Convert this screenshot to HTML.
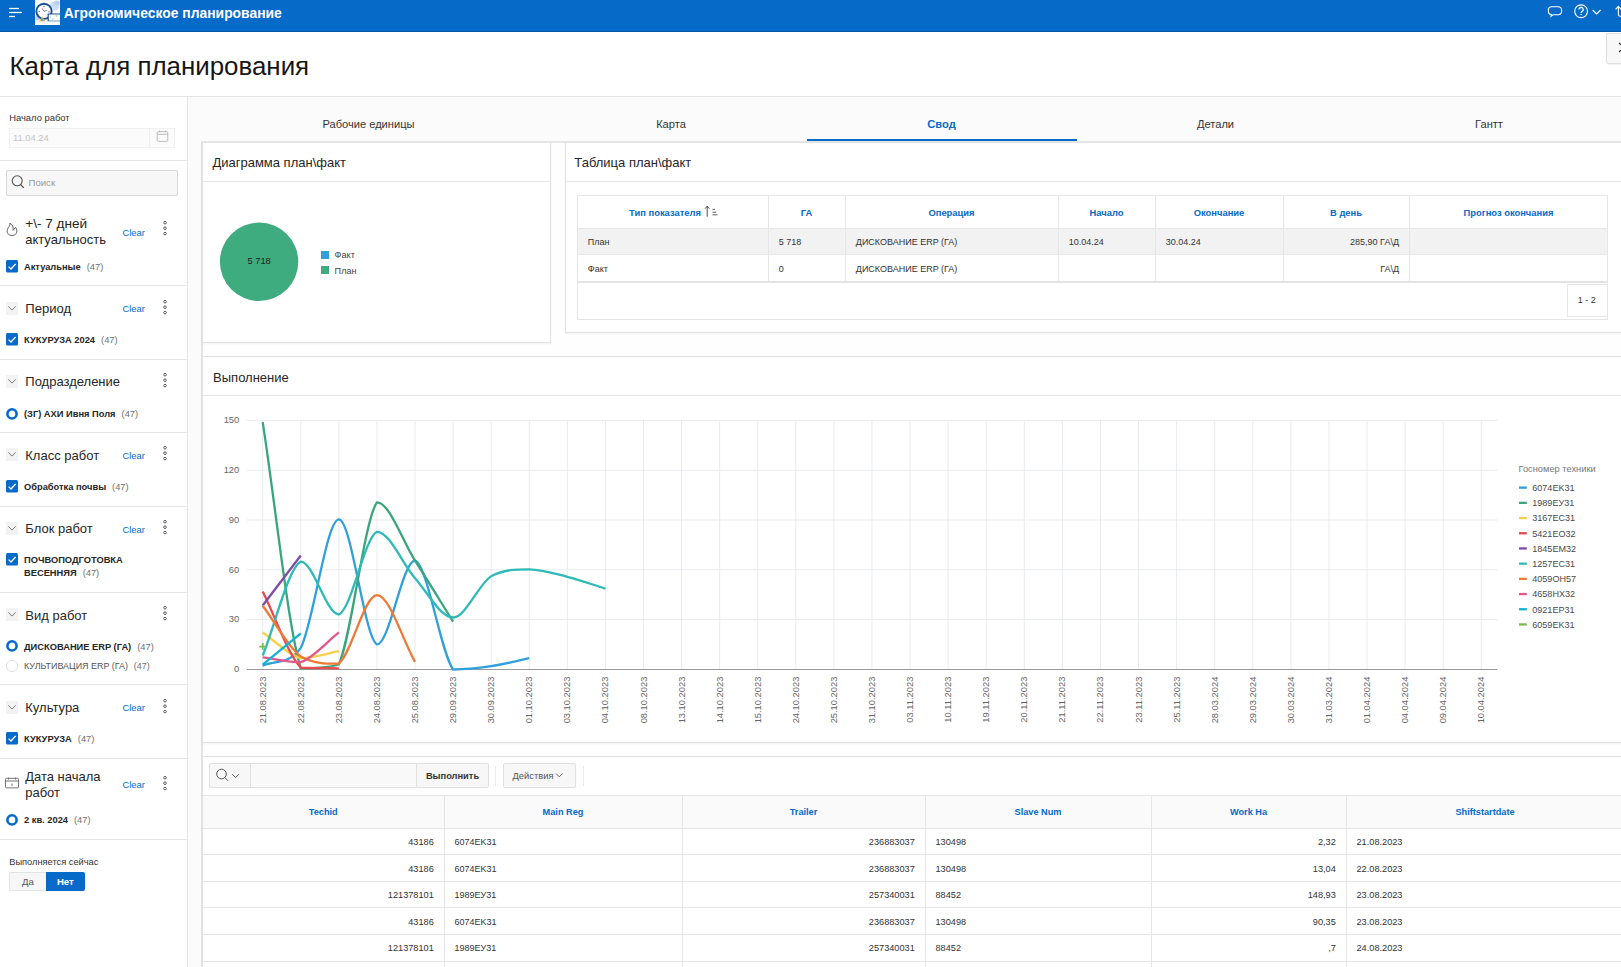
<!DOCTYPE html>
<html><head><meta charset="utf-8"><title>Карта для планирования</title>
<style>
html,body{margin:0;padding:0;}
body{width:1621px;height:967px;overflow:hidden;position:relative;background:#fff;font-family:"Liberation Sans", sans-serif;}
.b{position:absolute;}
.t{position:absolute;white-space:nowrap;line-height:1;}
svg text{font-family:"Liberation Sans", sans-serif;}
</style></head><body>
<div class="b" style="left:0px;top:0px;width:1621px;height:32px;background:#056ac8;"></div><div class="b" style="left:0px;top:31px;width:1621px;height:1px;background:#0458a8;"></div><svg class="b" style="left:0px;top:0px;" width="30" height="30" viewBox="0 0 30 30"><g stroke="#fff" stroke-width="1.3"><line x1="9" y1="8.5" x2="19" y2="8.5"/><line x1="9" y1="12.5" x2="22" y2="12.5"/><line x1="9" y1="16.5" x2="15" y2="16.5"/></g></svg><svg class="b" style="left:35px;top:0px;" width="25" height="25" viewBox="0 0 25 25"><rect x="0" y="0" width="25" height="25" fill="#fafcff"/>
<circle cx="19.5" cy="6" r="4.5" fill="#c9ddf6"/><circle cx="22" cy="3" r="2.5" fill="#b5d0f2"/><circle cx="17" cy="9.5" r="2" fill="#dce9f8"/>
<circle cx="2.5" cy="18" r="2.5" fill="#b9d3f0"/>
<circle cx="9" cy="11.3" r="7.6" fill="#fff" stroke="#1d4e8f" stroke-width="1.9"/>
<circle cx="9" cy="6.3" r="0.6" fill="#333"/><circle cx="4.2" cy="11.5" r="0.6" fill="#333"/><circle cx="14" cy="11.8" r="0.6" fill="#333"/>
<line x1="9" y1="11.3" x2="7" y2="8.3" stroke="#e04848" stroke-width="0.8"/>
<line x1="9" y1="11.3" x2="11.8" y2="10.3" stroke="#2a5fb0" stroke-width="0.8"/>
<path d="M4.2 15.5 l-2 -2.5" stroke="#e04848" stroke-width="0.6"/>
<path d="M4 21.5 l3.2 -5 l3.2 5z" fill="#f2b92e"/><circle cx="7.2" cy="19.8" r="1.2" fill="#4a9fd0"/>
<rect x="12.6" y="13.5" width="12.4" height="8" fill="#1f4f8f"/>
<rect x="13.8" y="14.5" width="11.2" height="6.2" fill="#fbfdff"/>
<circle cx="21.5" cy="16" r="0.8" fill="#8fd08a"/><circle cx="18" cy="19" r="0.8" fill="#9fd0a0"/><circle cx="15.5" cy="17" r="0.6" fill="#9cc3ec"/>
<rect x="0" y="21.7" width="25" height="3.3" fill="#fff"/>
<rect x="1" y="21.5" width="24" height="0.8" fill="#cfe3ef"/></svg><div class="t" style="left:63.80px;top:6.83px;font-size:13.9px;color:#fff;font-weight:bold;">Агрономическое планирование</div><svg class="b" style="left:1540px;top:0px;" width="81" height="32" viewBox="0 0 81 32"><g fill="none" stroke="#fff" stroke-width="1.1">
<path d="M11.6 6.7 h6.8 a3.2 3.2 0 0 1 3.2 3.2 v1.6 a3.2 3.2 0 0 1 -3.2 3.2 h-5.3 l-2 1.7 l0.2 -1.8 a3.2 3.2 0 0 1 -2.9 -3.1 v-1.6 a3.2 3.2 0 0 1 3.2 -3.2z"/>
<circle cx="41.1" cy="11.25" r="6.4"/>
<path d="M39 9.6 a2.1 2.1 0 1 1 3.1 1.8 c-0.7 0.35 -1 0.8 -1 1.6" stroke-width="1.3"/>
<path d="M52.6 10 l4 4 l4 -4"/>
<path d="M78.4 15 v-8.6 M75.6 9.4 l2.8 -3 l2.8 3 M78.4 14.5 q0 1.8 2 1.8 h3"/>
</g><circle cx="41.1" cy="14.6" r="0.75" fill="#fff"/></svg><div class="b" style="left:1605.5px;top:32.5px;width:20px;height:31px;background:#f8f8f8;border:1px solid #dedede;border-radius:0 0 0 3px;box-sizing:border-box;box-shadow:0 1px 1px rgba(0,0,0,0.05);"></div><svg class="b" style="left:1605px;top:33px;" width="16" height="30" viewBox="0 0 16 30"><path d="M14 10 l3 2.5 M14 19 l3 -2.5" stroke="#333" stroke-width="1.2" fill="none"/></svg><div class="t" style="left:9.50px;top:53.58px;font-size:25.9px;color:#161616;font-weight:normal;">Карта для планирования</div><div class="b" style="left:0px;top:96px;width:1621px;height:1px;background:#e3e3e3;"></div><div class="b" style="left:187px;top:97px;width:1px;height:870px;background:#e6e6e6;"></div><div class="t" style="left:9.20px;top:113.44px;font-size:9.4px;color:#333;font-weight:normal;">Начало работ</div><div class="b" style="left:9px;top:128px;width:165.5px;height:20px;background:#fbfbfb;border:1px solid #f1f1f1;box-sizing:border-box;"></div><div class="b" style="left:149.4px;top:128px;width:1px;height:20px;background:#eeeeee;"></div><div class="t" style="left:13.00px;top:133.24px;font-size:9.4px;color:#c4c4c4;font-weight:normal;">11.04.24</div><svg class="b" style="left:155px;top:128px;" width="16" height="16" viewBox="0 0 16 16"><g fill="none" stroke="#b4b4b4" stroke-width="0.85"><rect x="2.2" y="3.6" width="10.6" height="9.8" rx="1.2"/><line x1="2.2" y1="6.4" x2="12.8" y2="6.4"/><line x1="4.6" y1="2.6" x2="4.6" y2="4.4"/><line x1="10.6" y1="2.6" x2="10.6" y2="4.4"/></g></svg><div class="b" style="left:0px;top:160px;width:187px;height:1px;background:#e6e6e6;"></div><div class="b" style="left:6px;top:170px;width:172px;height:25.5px;background:#f7f7f7;border:1px solid #d9d9d9;border-radius:2px;box-sizing:border-box;"></div><svg class="b" style="left:9px;top:173px;" width="18" height="18" viewBox="0 0 18 18"><g fill="none" stroke="#555" stroke-width="1.1"><circle cx="8.2" cy="7.8" r="5"/><line x1="11.6" y1="11.5" x2="14.8" y2="14.8"/></g></svg><div class="t" style="left:28.50px;top:178.07px;font-size:9.6px;color:#9a9a9a;font-weight:normal;">Поиск</div><svg class="b" style="left:5px;top:221px;" width="14" height="16" viewBox="0 0 14 16"><path d="M4.9 2.2 C7.6 3.6 8.6 6.2 8 9.4 L10.5 6.4 C12.4 8.4 12.4 11.6 10.5 13.4 C9 14.9 5 15 3.3 13.2 C1.6 11.5 1.8 8.6 3.3 6.6 C4.3 5.1 5 3.6 4.9 2.2 Z" fill="none" stroke="#555" stroke-width="0.9" stroke-linejoin="round"/></svg><div class="t" style="left:25.20px;top:217.19px;font-size:13.6px;color:#262626;font-weight:normal;">+\- 7 дней</div><div class="t" style="left:25.20px;top:232.70px;font-size:13.0px;color:#262626;font-weight:normal;">актуальность</div><div class="t" style="left:122.50px;top:228.59px;font-size:9.35px;color:#056ac8;font-weight:normal;">Clear</div><svg class="b" style="left:160px;top:220.0px;" width="10" height="16" viewBox="0 0 10 16"><g fill="#fff" stroke="#444" stroke-width="0.85"><circle cx="5" cy="2.7" r="1.3"/><circle cx="5" cy="8.2" r="1.3"/><circle cx="5" cy="13.6" r="1.3"/></g></svg><svg class="b" style="left:6px;top:260px;" width="13" height="13" viewBox="0 0 13 13"><rect x="0" y="0" width="12" height="12.6" rx="1.5" fill="#056ac8"/><path d="M2.6 6.6 l2.4 2.4 l4.6 -5" fill="none" stroke="#fff" stroke-width="1.3"/></svg><div class="t" style="left:24px;top:262.73px;font-size:9.3px;color:#262626;font-weight:bold;">Актуальные<span style="font-weight:normal;color:#707070;margin-left:6px;">(47)</span></div><div class="b" style="left:0px;top:285px;width:187px;height:1px;background:#e6e6e6;"></div><div class="b" style="left:6px;top:302px;width:12px;height:12.5px;background:#f3f3f3;"></div><svg class="b" style="left:6px;top:302px;" width="12" height="13" viewBox="0 0 12 13"><path d="M2.3 4.3 l3.7 3.8 l3.7 -3.8" fill="none" stroke="#707070" stroke-width="0.9"/></svg><div class="t" style="left:25.30px;top:302.41px;font-size:13.1px;color:#262626;font-weight:normal;">Период</div><div class="t" style="left:122.50px;top:305.49px;font-size:9.35px;color:#056ac8;font-weight:normal;">Clear</div><svg class="b" style="left:160px;top:299.0px;" width="10" height="16" viewBox="0 0 10 16"><g fill="#fff" stroke="#444" stroke-width="0.85"><circle cx="5" cy="2.7" r="1.3"/><circle cx="5" cy="8.2" r="1.3"/><circle cx="5" cy="13.6" r="1.3"/></g></svg><svg class="b" style="left:6px;top:333.3px;" width="13" height="13" viewBox="0 0 13 13"><rect x="0" y="0" width="12" height="12.6" rx="1.5" fill="#056ac8"/><path d="M2.6 6.6 l2.4 2.4 l4.6 -5" fill="none" stroke="#fff" stroke-width="1.3"/></svg><div class="t" style="left:24px;top:335.73px;font-size:9.3px;color:#262626;font-weight:bold;">КУКУРУЗА 2024<span style="font-weight:normal;color:#707070;margin-left:6px;">(47)</span></div><div class="b" style="left:0px;top:359px;width:187px;height:1px;background:#e6e6e6;"></div><div class="b" style="left:6px;top:375px;width:12px;height:12.5px;background:#f3f3f3;"></div><svg class="b" style="left:6px;top:375px;" width="12" height="13" viewBox="0 0 12 13"><path d="M2.3 4.3 l3.7 3.8 l3.7 -3.8" fill="none" stroke="#707070" stroke-width="0.9"/></svg><div class="t" style="left:25.30px;top:375.30px;font-size:13.0px;color:#262626;font-weight:normal;">Подразделение</div><svg class="b" style="left:160px;top:372.0px;" width="10" height="16" viewBox="0 0 10 16"><g fill="#fff" stroke="#444" stroke-width="0.85"><circle cx="5" cy="2.7" r="1.3"/><circle cx="5" cy="8.2" r="1.3"/><circle cx="5" cy="13.6" r="1.3"/></g></svg><svg class="b" style="left:5px;top:406.5px;" width="14" height="14" viewBox="0 0 14 14"><circle cx="7" cy="6.9" r="4.6" fill="#fff" stroke="#056ac8" stroke-width="2.6"/></svg><div class="t" style="left:24px;top:409.73px;font-size:9.3px;color:#262626;font-weight:bold;">(ЗГ) АХИ Ивня Поля<span style="font-weight:normal;color:#707070;margin-left:6px;">(47)</span></div><div class="b" style="left:0px;top:432px;width:187px;height:1px;background:#e6e6e6;"></div><div class="b" style="left:6px;top:448.2px;width:12px;height:12.5px;background:#f3f3f3;"></div><svg class="b" style="left:6px;top:448.2px;" width="12" height="13" viewBox="0 0 12 13"><path d="M2.3 4.3 l3.7 3.8 l3.7 -3.8" fill="none" stroke="#707070" stroke-width="0.9"/></svg><div class="t" style="left:25.30px;top:448.90px;font-size:13.0px;color:#262626;font-weight:normal;">Класс работ</div><div class="t" style="left:122.50px;top:452.49px;font-size:9.35px;color:#056ac8;font-weight:normal;">Clear</div><svg class="b" style="left:160px;top:445.0px;" width="10" height="16" viewBox="0 0 10 16"><g fill="#fff" stroke="#444" stroke-width="0.85"><circle cx="5" cy="2.7" r="1.3"/><circle cx="5" cy="8.2" r="1.3"/><circle cx="5" cy="13.6" r="1.3"/></g></svg><svg class="b" style="left:6px;top:480.4px;" width="13" height="13" viewBox="0 0 13 13"><rect x="0" y="0" width="12" height="12.6" rx="1.5" fill="#056ac8"/><path d="M2.6 6.6 l2.4 2.4 l4.6 -5" fill="none" stroke="#fff" stroke-width="1.3"/></svg><div class="t" style="left:24px;top:482.83px;font-size:9.3px;color:#262626;font-weight:bold;">Обработка почвы<span style="font-weight:normal;color:#707070;margin-left:6px;">(47)</span></div><div class="b" style="left:0px;top:506px;width:187px;height:1px;background:#e6e6e6;"></div><div class="b" style="left:6px;top:522px;width:12px;height:12.5px;background:#f3f3f3;"></div><svg class="b" style="left:6px;top:522px;" width="12" height="13" viewBox="0 0 12 13"><path d="M2.3 4.3 l3.7 3.8 l3.7 -3.8" fill="none" stroke="#707070" stroke-width="0.9"/></svg><div class="t" style="left:25.30px;top:521.80px;font-size:13.0px;color:#262626;font-weight:normal;">Блок работ</div><div class="t" style="left:122.50px;top:525.99px;font-size:9.35px;color:#056ac8;font-weight:normal;">Clear</div><svg class="b" style="left:160px;top:519.0px;" width="10" height="16" viewBox="0 0 10 16"><g fill="#fff" stroke="#444" stroke-width="0.85"><circle cx="5" cy="2.7" r="1.3"/><circle cx="5" cy="8.2" r="1.3"/><circle cx="5" cy="13.6" r="1.3"/></g></svg><svg class="b" style="left:6px;top:553.4px;" width="13" height="13" viewBox="0 0 13 13"><rect x="0" y="0" width="12" height="12.6" rx="1.5" fill="#056ac8"/><path d="M2.6 6.6 l2.4 2.4 l4.6 -5" fill="none" stroke="#fff" stroke-width="1.3"/></svg><div class="t" style="left:24.00px;top:556.03px;font-size:9.3px;color:#262626;font-weight:bold;">ПОЧВОПОДГОТОВКА</div><div class="t" style="left:24px;top:568.93px;font-size:9.3px;color:#262626;font-weight:bold;">ВЕСЕННЯЯ<span style="font-weight:normal;color:#707070;margin-left:6px;">(47)</span></div><div class="b" style="left:0px;top:592px;width:187px;height:1px;background:#e6e6e6;"></div><div class="b" style="left:6px;top:608.2px;width:12px;height:12.5px;background:#f3f3f3;"></div><svg class="b" style="left:6px;top:608.2px;" width="12" height="13" viewBox="0 0 12 13"><path d="M2.3 4.3 l3.7 3.8 l3.7 -3.8" fill="none" stroke="#707070" stroke-width="0.9"/></svg><div class="t" style="left:25.30px;top:608.90px;font-size:13.0px;color:#262626;font-weight:normal;">Вид работ</div><svg class="b" style="left:160px;top:605.0px;" width="10" height="16" viewBox="0 0 10 16"><g fill="#fff" stroke="#444" stroke-width="0.85"><circle cx="5" cy="2.7" r="1.3"/><circle cx="5" cy="8.2" r="1.3"/><circle cx="5" cy="13.6" r="1.3"/></g></svg><svg class="b" style="left:5px;top:639.3px;" width="14" height="14" viewBox="0 0 14 14"><circle cx="7" cy="6.9" r="4.6" fill="#fff" stroke="#056ac8" stroke-width="2.6"/></svg><div class="t" style="left:24px;top:643.13px;font-size:9.3px;color:#262626;font-weight:bold;">ДИСКОВАНИЕ ERP (ГА)<span style="font-weight:normal;color:#707070;margin-left:6px;">(47)</span></div><svg class="b" style="left:5px;top:658.7px;" width="14" height="14" viewBox="0 0 14 14"><circle cx="7" cy="7" r="5.6" fill="#fff" stroke="#dcdcdc" stroke-width="0.9"/></svg><div class="t" style="left:24px;top:662.42px;font-size:8.95px;color:#555;font-weight:normal;">КУЛЬТИВАЦИЯ ERP (ГА)<span style="font-weight:normal;color:#707070;margin-left:6px;">(47)</span></div><div class="b" style="left:0px;top:684px;width:187px;height:1px;background:#e6e6e6;"></div><div class="b" style="left:6px;top:701px;width:12px;height:12.5px;background:#f3f3f3;"></div><svg class="b" style="left:6px;top:701px;" width="12" height="13" viewBox="0 0 12 13"><path d="M2.3 4.3 l3.7 3.8 l3.7 -3.8" fill="none" stroke="#707070" stroke-width="0.9"/></svg><div class="t" style="left:25.30px;top:700.60px;font-size:13.0px;color:#262626;font-weight:normal;">Культура</div><div class="t" style="left:122.50px;top:704.49px;font-size:9.35px;color:#056ac8;font-weight:normal;">Clear</div><svg class="b" style="left:160px;top:698.0px;" width="10" height="16" viewBox="0 0 10 16"><g fill="#fff" stroke="#444" stroke-width="0.85"><circle cx="5" cy="2.7" r="1.3"/><circle cx="5" cy="8.2" r="1.3"/><circle cx="5" cy="13.6" r="1.3"/></g></svg><svg class="b" style="left:6px;top:732.4px;" width="13" height="13" viewBox="0 0 13 13"><rect x="0" y="0" width="12" height="12.6" rx="1.5" fill="#056ac8"/><path d="M2.6 6.6 l2.4 2.4 l4.6 -5" fill="none" stroke="#fff" stroke-width="1.3"/></svg><div class="t" style="left:24px;top:734.53px;font-size:9.3px;color:#262626;font-weight:bold;">КУКУРУЗА<span style="font-weight:normal;color:#707070;margin-left:6px;">(47)</span></div><div class="b" style="left:0px;top:757.5px;width:187px;height:1px;background:#e6e6e6;"></div><svg class="b" style="left:4px;top:775px;" width="16" height="14" viewBox="0 0 16 14"><g fill="none" stroke="#666" stroke-width="0.9"><rect x="1.5" y="3.3" width="13" height="9.6" rx="1"/><line x1="1.5" y1="6" x2="14.5" y2="6"/><line x1="4.5" y1="2.6" x2="4.5" y2="4.5"/><line x1="11.5" y1="2.6" x2="11.5" y2="4.5"/><line x1="8" y1="8.5" x2="8" y2="11.2"/></g></svg><div class="t" style="left:25.20px;top:770.20px;font-size:13.0px;color:#262626;font-weight:normal;">Дата начала</div><div class="t" style="left:25.20px;top:786.00px;font-size:13.0px;color:#262626;font-weight:normal;">работ</div><div class="t" style="left:122.50px;top:781.19px;font-size:9.35px;color:#056ac8;font-weight:normal;">Clear</div><svg class="b" style="left:160px;top:774.5px;" width="10" height="16" viewBox="0 0 10 16"><g fill="#fff" stroke="#444" stroke-width="0.85"><circle cx="5" cy="2.7" r="1.3"/><circle cx="5" cy="8.2" r="1.3"/><circle cx="5" cy="13.6" r="1.3"/></g></svg><svg class="b" style="left:5px;top:812.5px;" width="14" height="14" viewBox="0 0 14 14"><circle cx="7" cy="6.9" r="4.6" fill="#fff" stroke="#056ac8" stroke-width="2.6"/></svg><div class="t" style="left:24px;top:816.23px;font-size:9.3px;color:#262626;font-weight:bold;">2 кв. 2024<span style="font-weight:normal;color:#707070;margin-left:6px;">(47)</span></div><div class="b" style="left:0px;top:839px;width:187px;height:1px;background:#e6e6e6;"></div><div class="t" style="left:9.30px;top:858.17px;font-size:9.25px;color:#333;font-weight:normal;">Выполняется сейчас</div><div class="b" style="left:9.3px;top:872.2px;width:37px;height:18.5px;background:#f7f7f7;border:1px solid #e3e3e3;border-right:none;border-radius:2px 0 0 2px;box-sizing:border-box;"></div><div class="b" style="left:46px;top:872.2px;width:38.7px;height:18.5px;background:#056ac8;border-radius:0 2px 2px 0;"></div><div class="t" style="left:-272.00px;width:600px;text-align:center;top:876.67px;font-size:9.6px;color:#555;font-weight:normal;">Да</div><div class="t" style="left:-234.70px;width:600px;text-align:center;top:876.67px;font-size:9.6px;color:#fff;font-weight:bold;">Нет</div><div class="b" style="left:188px;top:97px;width:1433px;height:870px;background:#fbfbfb;"></div><div class="t" style="left:68.50px;width:600px;text-align:center;top:119.10px;font-size:11.1px;color:#333;font-weight:normal;">Рабочие единицы</div><div class="t" style="left:371.00px;width:600px;text-align:center;top:119.10px;font-size:11.1px;color:#333;font-weight:normal;">Карта</div><div class="t" style="left:641.50px;width:600px;text-align:center;top:119.10px;font-size:11.1px;color:#056ac8;font-weight:bold;">Свод</div><div class="t" style="left:915.50px;width:600px;text-align:center;top:119.10px;font-size:11.1px;color:#333;font-weight:normal;">Детали</div><div class="t" style="left:1189.00px;width:600px;text-align:center;top:119.10px;font-size:11.1px;color:#333;font-weight:normal;">Гантт</div><div class="b" style="left:201px;top:141px;width:1420px;height:826px;background:#fefefe;border-top:2px solid #e6e6e6;border-left:2px solid #e3e3e3;box-sizing:border-box;"></div><div class="b" style="left:807px;top:139px;width:270px;height:2px;background:#056ac8;"></div><div class="b" style="left:201.5px;top:142px;width:349.5px;height:200.5px;background:#fff;border:1px solid #e2e2e2;box-sizing:border-box;box-shadow:0 1px 2px rgba(0,0,0,0.05);"></div><div class="b" style="left:202.5px;top:181px;width:347.5px;height:1px;background:#e6e6e6;"></div><div class="t" style="left:212.40px;top:156.00px;font-size:13.0px;color:#262626;font-weight:normal;">Диаграмма план\факт</div><svg class="b" style="left:215px;top:218px;" width="90" height="90" viewBox="0 0 90 90"><circle cx="44.1" cy="43.8" r="39.2" fill="#3fac80"/></svg><div class="t" style="left:-40.90px;width:600px;text-align:center;top:257.03px;font-size:9.3px;color:#222;font-weight:normal;">5 718</div><div class="b" style="left:321px;top:251px;width:8px;height:8px;background:#309fdb;"></div><div class="b" style="left:321px;top:265.8px;width:8px;height:8px;background:#3fac80;"></div><div class="t" style="left:334.60px;top:250.90px;font-size:9.1px;color:#444;font-weight:normal;">Факт</div><div class="t" style="left:334.60px;top:266.50px;font-size:9.1px;color:#444;font-weight:normal;">План</div><div class="b" style="left:564.5px;top:142px;width:1070px;height:190.5px;background:#fff;border:1px solid #e2e2e2;box-sizing:border-box;box-shadow:0 1px 2px rgba(0,0,0,0.05);"></div><div class="b" style="left:565.5px;top:181px;width:1068px;height:1px;background:#e6e6e6;"></div><div class="t" style="left:574.30px;top:155.70px;font-size:13.0px;color:#262626;font-weight:normal;">Таблица план\факт</div><div class="b" style="left:577px;top:195px;width:1031px;height:124.5px;background:#fff;border:1px solid #e6e6e6;box-sizing:border-box;"></div><div class="b" style="left:578px;top:228px;width:1029px;height:26px;background:#f2f2f2;"></div><div class="b" style="left:577px;top:228px;width:1031px;height:1px;background:#e6e6e6;"></div><div class="b" style="left:577px;top:254px;width:1031px;height:1px;background:#e6e6e6;"></div><div class="b" style="left:577px;top:281px;width:1031px;height:1px;background:#e6e6e6;"></div><div class="b" style="left:577px;top:281px;width:1031px;height:2px;background:#e3e3e3;"></div><div class="b" style="left:768px;top:195px;width:1px;height:86px;background:#e6e6e6;"></div><div class="b" style="left:845px;top:195px;width:1px;height:86px;background:#e6e6e6;"></div><div class="b" style="left:1058px;top:195px;width:1px;height:86px;background:#e6e6e6;"></div><div class="b" style="left:1155px;top:195px;width:1px;height:86px;background:#e6e6e6;"></div><div class="b" style="left:1283px;top:195px;width:1px;height:86px;background:#e6e6e6;"></div><div class="b" style="left:1409px;top:195px;width:1px;height:86px;background:#e6e6e6;"></div><div class="t" style="left:365.00px;width:600px;text-align:center;top:207.74px;font-size:9.4px;color:#056ac8;font-weight:bold;">Тип показателя</div><svg class="b" style="left:702px;top:204px;" width="18" height="14" viewBox="0 0 18 14"><g fill="none" stroke="#333" stroke-width="0.85"><path d="M5.2 12.7 v-10.5 M3 4.7 l2.2 -2.5 l2.2 2.5"/><path d="M10.5 5.4 h2.5 M10.5 8.2 h3.8 M10.5 10.8 h5" stroke-width="0.8"/></g></svg><div class="t" style="left:506.50px;width:600px;text-align:center;top:207.74px;font-size:9.4px;color:#056ac8;font-weight:bold;">ГА</div><div class="t" style="left:651.50px;width:600px;text-align:center;top:207.74px;font-size:9.4px;color:#056ac8;font-weight:bold;">Операция</div><div class="t" style="left:806.50px;width:600px;text-align:center;top:207.74px;font-size:9.4px;color:#056ac8;font-weight:bold;">Начало</div><div class="t" style="left:919.00px;width:600px;text-align:center;top:207.74px;font-size:9.4px;color:#056ac8;font-weight:bold;">Окончание</div><div class="t" style="left:1046.00px;width:600px;text-align:center;top:207.74px;font-size:9.4px;color:#056ac8;font-weight:bold;">В день</div><div class="t" style="left:1208.50px;width:600px;text-align:center;top:207.74px;font-size:9.4px;color:#056ac8;font-weight:bold;">Прогноз окончания</div><div class="t" style="left:587.80px;top:238.08px;font-size:9.0px;color:#333;font-weight:normal;">План</div><div class="t" style="left:778.80px;top:238.08px;font-size:9.0px;color:#333;font-weight:normal;">5 718</div><div class="t" style="left:855.80px;top:238.08px;font-size:9.0px;color:#333;font-weight:normal;">ДИСКОВАНИЕ ERP (ГА)</div><div class="t" style="left:1068.80px;top:238.08px;font-size:9.0px;color:#333;font-weight:normal;">10.04.24</div><div class="t" style="left:1165.80px;top:238.08px;font-size:9.0px;color:#333;font-weight:normal;">30.04.24</div><div class="t" style="left:587.80px;top:264.78px;font-size:9.0px;color:#333;font-weight:normal;">Факт</div><div class="t" style="left:778.80px;top:264.78px;font-size:9.0px;color:#333;font-weight:normal;">0</div><div class="t" style="left:855.80px;top:264.78px;font-size:9.0px;color:#333;font-weight:normal;">ДИСКОВАНИЕ ERP (ГА)</div><div class="t" style="left:799.00px;width:600px;text-align:right;top:238.08px;font-size:9.0px;color:#333;font-weight:normal;">285,90 ГА\Д</div><div class="t" style="left:799.00px;width:600px;text-align:right;top:264.78px;font-size:9.0px;color:#333;font-weight:normal;">ГА\Д</div><div class="b" style="left:1566.7px;top:284.3px;width:41.3px;height:33px;background:#fff;border:1px solid #e6e6e6;box-sizing:border-box;"></div><div class="t" style="left:1286.70px;width:600px;text-align:center;top:296.38px;font-size:9.0px;color:#333;font-weight:normal;">1 - 2</div><div class="b" style="left:201.5px;top:356px;width:1440px;height:386.5px;background:#fff;border:1px solid #e2e2e2;box-sizing:border-box;box-shadow:0 1px 2px rgba(0,0,0,0.05);"></div><div class="b" style="left:202.5px;top:395px;width:1438px;height:1px;background:#e6e6e6;"></div><div class="t" style="left:213.10px;top:371.00px;font-size:13.0px;color:#262626;font-weight:normal;">Выполнение</div><svg class="b" style="left:0;top:0;font-family:"Liberation Sans", sans-serif" width="1621" height="967" viewBox="0 0 1621 967"><line x1="246.8" y1="619.67" x2="1497.5" y2="619.67" stroke="#e8ebef" stroke-width="1"/><line x1="246.8" y1="569.84" x2="1497.5" y2="569.84" stroke="#e8ebef" stroke-width="1"/><line x1="246.8" y1="520.01" x2="1497.5" y2="520.01" stroke="#e8ebef" stroke-width="1"/><line x1="246.8" y1="470.18" x2="1497.5" y2="470.18" stroke="#e8ebef" stroke-width="1"/><line x1="246.8" y1="420.35" x2="1497.5" y2="420.35" stroke="#e8ebef" stroke-width="1"/><line x1="262.70" y1="420.35" x2="262.70" y2="669.50" stroke="#e8ebef" stroke-width="1"/><line x1="300.78" y1="420.35" x2="300.78" y2="669.50" stroke="#e8ebef" stroke-width="1"/><line x1="338.86" y1="420.35" x2="338.86" y2="669.50" stroke="#e8ebef" stroke-width="1"/><line x1="376.94" y1="420.35" x2="376.94" y2="669.50" stroke="#e8ebef" stroke-width="1"/><line x1="415.02" y1="420.35" x2="415.02" y2="669.50" stroke="#e8ebef" stroke-width="1"/><line x1="453.10" y1="420.35" x2="453.10" y2="669.50" stroke="#e8ebef" stroke-width="1"/><line x1="491.18" y1="420.35" x2="491.18" y2="669.50" stroke="#e8ebef" stroke-width="1"/><line x1="529.26" y1="420.35" x2="529.26" y2="669.50" stroke="#e8ebef" stroke-width="1"/><line x1="567.34" y1="420.35" x2="567.34" y2="669.50" stroke="#e8ebef" stroke-width="1"/><line x1="605.42" y1="420.35" x2="605.42" y2="669.50" stroke="#e8ebef" stroke-width="1"/><line x1="643.50" y1="420.35" x2="643.50" y2="669.50" stroke="#e8ebef" stroke-width="1"/><line x1="681.58" y1="420.35" x2="681.58" y2="669.50" stroke="#e8ebef" stroke-width="1"/><line x1="719.66" y1="420.35" x2="719.66" y2="669.50" stroke="#e8ebef" stroke-width="1"/><line x1="757.74" y1="420.35" x2="757.74" y2="669.50" stroke="#e8ebef" stroke-width="1"/><line x1="795.82" y1="420.35" x2="795.82" y2="669.50" stroke="#e8ebef" stroke-width="1"/><line x1="833.90" y1="420.35" x2="833.90" y2="669.50" stroke="#e8ebef" stroke-width="1"/><line x1="871.98" y1="420.35" x2="871.98" y2="669.50" stroke="#e8ebef" stroke-width="1"/><line x1="910.06" y1="420.35" x2="910.06" y2="669.50" stroke="#e8ebef" stroke-width="1"/><line x1="948.14" y1="420.35" x2="948.14" y2="669.50" stroke="#e8ebef" stroke-width="1"/><line x1="986.22" y1="420.35" x2="986.22" y2="669.50" stroke="#e8ebef" stroke-width="1"/><line x1="1024.30" y1="420.35" x2="1024.30" y2="669.50" stroke="#e8ebef" stroke-width="1"/><line x1="1062.38" y1="420.35" x2="1062.38" y2="669.50" stroke="#e8ebef" stroke-width="1"/><line x1="1100.46" y1="420.35" x2="1100.46" y2="669.50" stroke="#e8ebef" stroke-width="1"/><line x1="1138.54" y1="420.35" x2="1138.54" y2="669.50" stroke="#e8ebef" stroke-width="1"/><line x1="1176.62" y1="420.35" x2="1176.62" y2="669.50" stroke="#e8ebef" stroke-width="1"/><line x1="1214.70" y1="420.35" x2="1214.70" y2="669.50" stroke="#e8ebef" stroke-width="1"/><line x1="1252.78" y1="420.35" x2="1252.78" y2="669.50" stroke="#e8ebef" stroke-width="1"/><line x1="1290.86" y1="420.35" x2="1290.86" y2="669.50" stroke="#e8ebef" stroke-width="1"/><line x1="1328.94" y1="420.35" x2="1328.94" y2="669.50" stroke="#e8ebef" stroke-width="1"/><line x1="1367.02" y1="420.35" x2="1367.02" y2="669.50" stroke="#e8ebef" stroke-width="1"/><line x1="1405.10" y1="420.35" x2="1405.10" y2="669.50" stroke="#e8ebef" stroke-width="1"/><line x1="1443.18" y1="420.35" x2="1443.18" y2="669.50" stroke="#e8ebef" stroke-width="1"/><line x1="1481.26" y1="420.35" x2="1481.26" y2="669.50" stroke="#e8ebef" stroke-width="1"/><line x1="246.8" y1="669.50" x2="1497.5" y2="669.50" stroke="#9a9a9a" stroke-width="1"/><path d="M262.70,665.65C275.39,659.71 288.09,665.65 300.78,647.84C313.47,623.47 326.17,520.00 338.86,519.43C351.55,519.43 364.25,637.54 376.94,644.42C389.63,644.42 402.33,560.70 415.02,560.70C427.71,564.88 440.41,651.92 453.10,669.50C465.79,669.50 478.49,668.06 491.18,666.18C503.87,664.30 516.57,660.86 529.26,658.21" fill="none" stroke="#309fdb" stroke-width="2.3" stroke-linejoin="round"/><path d="M262.70,422.13C275.39,504.20 288.09,627.94 300.78,668.34C313.47,668.34 326.17,668.34 338.86,664.52C351.55,636.86 364.25,519.71 376.94,502.40C389.63,502.40 402.33,540.83 415.02,560.70C427.71,580.58 440.41,601.34 453.10,621.66" fill="none" stroke="#3aa57b" stroke-width="2.3" stroke-linejoin="round"/><path d="M262.70,632.46C275.39,641.04 288.09,655.08 300.78,658.21C313.47,658.21 326.17,653.55 338.86,651.23" fill="none" stroke="#fbce4a" stroke-width="2.3" stroke-linejoin="round"/><path d="M262.70,591.43C275.39,616.85 288.09,654.86 300.78,667.67C313.47,668.34 326.17,668.12 338.86,668.34" fill="none" stroke="#e84a4f" stroke-width="2.3" stroke-linejoin="round"/><path d="M262.70,605.55L300.78,555.56" fill="none" stroke="#7e4da8" stroke-width="2.3" stroke-linejoin="round"/><path d="M262.70,655.55C275.39,624.21 288.09,568.37 300.78,561.53C313.47,561.53 326.17,614.52 338.86,614.52C351.55,609.57 364.25,537.87 376.94,531.80C389.63,531.80 402.33,563.86 415.02,578.14C427.71,592.43 440.41,617.51 453.10,617.51C465.79,617.18 478.49,584.18 491.18,576.15C503.87,569.34 516.57,569.34 529.26,569.34C541.95,569.45 554.65,573.60 567.34,576.82C580.03,580.03 592.73,584.68 605.42,588.61" fill="none" stroke="#2ebab6" stroke-width="2.3" stroke-linejoin="round"/><path d="M262.70,605.72C275.39,622.66 288.09,646.88 300.78,656.54C313.47,663.69 326.17,663.69 338.86,663.69C351.55,653.44 364.25,595.39 376.94,595.09C389.63,595.09 402.33,639.60 415.02,661.86" fill="none" stroke="#ed7a36" stroke-width="2.3" stroke-linejoin="round"/><path d="M262.70,657.37C275.39,658.98 288.09,662.19 300.78,662.19C313.47,658.04 326.17,642.37 338.86,632.46" fill="none" stroke="#e4578a" stroke-width="2.3" stroke-linejoin="round"/><path d="M262.70,664.68L300.78,633.29" fill="none" stroke="#13b4d2" stroke-width="2.3" stroke-linejoin="round"/><path d="M259.20,646.58h7M262.70,643.08v7" stroke="#7dbb4c" stroke-width="1.8"/><text x="239.2" y="672.30" text-anchor="end" font-size="9.3" fill="#666">0</text><text x="239.2" y="622.47" text-anchor="end" font-size="9.3" fill="#666">30</text><text x="239.2" y="572.64" text-anchor="end" font-size="9.3" fill="#666">60</text><text x="239.2" y="522.81" text-anchor="end" font-size="9.3" fill="#666">90</text><text x="239.2" y="472.98" text-anchor="end" font-size="9.3" fill="#666">120</text><text x="239.2" y="423.15" text-anchor="end" font-size="9.3" fill="#666">150</text><text transform="translate(265.70,676.6) rotate(-90)" text-anchor="end" font-size="9.35" fill="#666">21.08.2023</text><text transform="translate(303.78,676.6) rotate(-90)" text-anchor="end" font-size="9.35" fill="#666">22.08.2023</text><text transform="translate(341.86,676.6) rotate(-90)" text-anchor="end" font-size="9.35" fill="#666">23.08.2023</text><text transform="translate(379.94,676.6) rotate(-90)" text-anchor="end" font-size="9.35" fill="#666">24.08.2023</text><text transform="translate(418.02,676.6) rotate(-90)" text-anchor="end" font-size="9.35" fill="#666">25.08.2023</text><text transform="translate(456.10,676.6) rotate(-90)" text-anchor="end" font-size="9.35" fill="#666">29.09.2023</text><text transform="translate(494.18,676.6) rotate(-90)" text-anchor="end" font-size="9.35" fill="#666">30.09.2023</text><text transform="translate(532.26,676.6) rotate(-90)" text-anchor="end" font-size="9.35" fill="#666">01.10.2023</text><text transform="translate(570.34,676.6) rotate(-90)" text-anchor="end" font-size="9.35" fill="#666">03.10.2023</text><text transform="translate(608.42,676.6) rotate(-90)" text-anchor="end" font-size="9.35" fill="#666">04.10.2023</text><text transform="translate(646.50,676.6) rotate(-90)" text-anchor="end" font-size="9.35" fill="#666">08.10.2023</text><text transform="translate(684.58,676.6) rotate(-90)" text-anchor="end" font-size="9.35" fill="#666">13.10.2023</text><text transform="translate(722.66,676.6) rotate(-90)" text-anchor="end" font-size="9.35" fill="#666">14.10.2023</text><text transform="translate(760.74,676.6) rotate(-90)" text-anchor="end" font-size="9.35" fill="#666">15.10.2023</text><text transform="translate(798.82,676.6) rotate(-90)" text-anchor="end" font-size="9.35" fill="#666">24.10.2023</text><text transform="translate(836.90,676.6) rotate(-90)" text-anchor="end" font-size="9.35" fill="#666">25.10.2023</text><text transform="translate(874.98,676.6) rotate(-90)" text-anchor="end" font-size="9.35" fill="#666">31.10.2023</text><text transform="translate(913.06,676.6) rotate(-90)" text-anchor="end" font-size="9.35" fill="#666">03.11.2023</text><text transform="translate(951.14,676.6) rotate(-90)" text-anchor="end" font-size="9.35" fill="#666">10.11.2023</text><text transform="translate(989.22,676.6) rotate(-90)" text-anchor="end" font-size="9.35" fill="#666">19.11.2023</text><text transform="translate(1027.30,676.6) rotate(-90)" text-anchor="end" font-size="9.35" fill="#666">20.11.2023</text><text transform="translate(1065.38,676.6) rotate(-90)" text-anchor="end" font-size="9.35" fill="#666">21.11.2023</text><text transform="translate(1103.46,676.6) rotate(-90)" text-anchor="end" font-size="9.35" fill="#666">22.11.2023</text><text transform="translate(1141.54,676.6) rotate(-90)" text-anchor="end" font-size="9.35" fill="#666">23.11.2023</text><text transform="translate(1179.62,676.6) rotate(-90)" text-anchor="end" font-size="9.35" fill="#666">25.11.2023</text><text transform="translate(1217.70,676.6) rotate(-90)" text-anchor="end" font-size="9.35" fill="#666">28.03.2024</text><text transform="translate(1255.78,676.6) rotate(-90)" text-anchor="end" font-size="9.35" fill="#666">29.03.2024</text><text transform="translate(1293.86,676.6) rotate(-90)" text-anchor="end" font-size="9.35" fill="#666">30.03.2024</text><text transform="translate(1331.94,676.6) rotate(-90)" text-anchor="end" font-size="9.35" fill="#666">31.03.2024</text><text transform="translate(1370.02,676.6) rotate(-90)" text-anchor="end" font-size="9.35" fill="#666">01.04.2024</text><text transform="translate(1408.10,676.6) rotate(-90)" text-anchor="end" font-size="9.35" fill="#666">04.04.2024</text><text transform="translate(1446.18,676.6) rotate(-90)" text-anchor="end" font-size="9.35" fill="#666">09.04.2024</text><text transform="translate(1484.26,676.6) rotate(-90)" text-anchor="end" font-size="9.35" fill="#666">10.04.2024</text><text x="1518.5" y="472" font-size="9.3" fill="#777">Госномер техники</text><rect x="1519" y="486.50" width="7.8" height="2.3" fill="#309fdb"/><text x="1532.2" y="490.90" font-size="9.1" fill="#4a4a4a">6074EK31</text><rect x="1519" y="501.70" width="7.8" height="2.3" fill="#3aa57b"/><text x="1532.2" y="506.10" font-size="9.1" fill="#4a4a4a">1989EУ31</text><rect x="1519" y="516.90" width="7.8" height="2.3" fill="#fbce4a"/><text x="1532.2" y="521.30" font-size="9.1" fill="#4a4a4a">3167EC31</text><rect x="1519" y="532.10" width="7.8" height="2.3" fill="#e84a4f"/><text x="1532.2" y="536.50" font-size="9.1" fill="#4a4a4a">5421EO32</text><rect x="1519" y="547.30" width="7.8" height="2.3" fill="#7e4da8"/><text x="1532.2" y="551.70" font-size="9.1" fill="#4a4a4a">1845EM32</text><rect x="1519" y="562.50" width="7.8" height="2.3" fill="#2ebab6"/><text x="1532.2" y="566.90" font-size="9.1" fill="#4a4a4a">1257EC31</text><rect x="1519" y="577.70" width="7.8" height="2.3" fill="#ed7a36"/><text x="1532.2" y="582.10" font-size="9.1" fill="#4a4a4a">4059OH57</text><rect x="1519" y="592.90" width="7.8" height="2.3" fill="#e4578a"/><text x="1532.2" y="597.30" font-size="9.1" fill="#4a4a4a">4658HX32</text><rect x="1519" y="608.10" width="7.8" height="2.3" fill="#13b4d2"/><text x="1532.2" y="612.50" font-size="9.1" fill="#4a4a4a">0921EP31</text><rect x="1519" y="623.30" width="7.8" height="2.3" fill="#7dbb4c"/><text x="1532.2" y="627.70" font-size="9.1" fill="#4a4a4a">6059EK31</text></svg><div class="b" style="left:201.5px;top:756.3px;width:1440px;height:300px;background:#fff;border:1px solid #e2e2e2;box-sizing:border-box;"></div><div class="b" style="left:209.3px;top:763.3px;width:279.5px;height:25px;background:#f7f7f7;border:1px solid #e0e0e0;border-radius:2px;box-sizing:border-box;"></div><div class="b" style="left:249.5px;top:763.3px;width:1px;height:25px;background:#e0e0e0;"></div><div class="b" style="left:250.5px;top:764.3px;width:165.8px;height:23px;background:#f9f9f9;"></div><div class="b" style="left:416.3px;top:763.3px;width:1px;height:25px;background:#e0e0e0;"></div><svg class="b" style="left:213px;top:766px;" width="34" height="20" viewBox="0 0 34 20"><g fill="none" stroke="#555" stroke-width="1"><circle cx="8.5" cy="8" r="4.8"/><line x1="11.8" y1="11.5" x2="15" y2="14.8"/><path d="M19.3 8.2 l3.3 3.3 l3.3 -3.3"/></g></svg><div class="t" style="left:152.50px;width:600px;text-align:center;top:771.93px;font-size:9.3px;color:#333;font-weight:bold;">Выполнить</div><div class="b" style="left:495px;top:766px;width:1px;height:20px;background:#ececec;"></div><div class="b" style="left:502.5px;top:763.3px;width:73.3px;height:25px;background:#f7f7f7;border:1px solid #e0e0e0;border-radius:2px;box-sizing:border-box;"></div><div class="t" style="left:512.50px;top:771.88px;font-size:9.36px;color:#555;font-weight:normal;">Действия</div><svg class="b" style="left:553px;top:768px;" width="14" height="14" viewBox="0 0 14 14"><path d="M3 5.5 l3.3 3.3 l3.3 -3.3" fill="none" stroke="#555" stroke-width="0.9"/></svg><div class="b" style="left:582.5px;top:766px;width:1px;height:20px;background:#ececec;"></div><div class="b" style="left:203px;top:795px;width:1440px;height:33px;background:#fafafa;"></div><div class="b" style="left:203px;top:795px;width:1440px;height:1px;background:#e6e6e6;"></div><div class="b" style="left:203px;top:828px;width:1440px;height:1px;background:#e6e6e6;"></div><div class="b" style="left:203px;top:854px;width:1440px;height:1px;background:#e6e6e6;"></div><div class="b" style="left:203px;top:881px;width:1440px;height:1px;background:#e6e6e6;"></div><div class="b" style="left:203px;top:907px;width:1440px;height:1px;background:#e6e6e6;"></div><div class="b" style="left:203px;top:934px;width:1440px;height:1px;background:#e6e6e6;"></div><div class="b" style="left:203px;top:960.5px;width:1440px;height:1px;background:#e6e6e6;"></div><div class="b" style="left:444px;top:795.5px;width:1px;height:200px;background:#e6e6e6;"></div><div class="b" style="left:682px;top:795.5px;width:1px;height:200px;background:#e6e6e6;"></div><div class="b" style="left:925px;top:795.5px;width:1px;height:200px;background:#e6e6e6;"></div><div class="b" style="left:1151px;top:795.5px;width:1px;height:200px;background:#e6e6e6;"></div><div class="b" style="left:1346px;top:795.5px;width:1px;height:200px;background:#e6e6e6;"></div><div class="t" style="left:23.25px;width:600px;text-align:center;top:808.21px;font-size:9.2px;color:#056ac8;font-weight:bold;">Techid</div><div class="t" style="left:263.00px;width:600px;text-align:center;top:808.21px;font-size:9.2px;color:#056ac8;font-weight:bold;">Main Reg</div><div class="t" style="left:503.50px;width:600px;text-align:center;top:808.21px;font-size:9.2px;color:#056ac8;font-weight:bold;">Trailer</div><div class="t" style="left:738.00px;width:600px;text-align:center;top:808.21px;font-size:9.2px;color:#056ac8;font-weight:bold;">Slave Num</div><div class="t" style="left:948.50px;width:600px;text-align:center;top:808.21px;font-size:9.2px;color:#056ac8;font-weight:bold;">Work Ha</div><div class="t" style="left:1185.00px;width:600px;text-align:center;top:808.21px;font-size:9.2px;color:#056ac8;font-weight:bold;">Shiftstartdate</div><div class="t" style="left:-166.20px;width:600px;text-align:right;top:837.81px;font-size:9.2px;color:#333;font-weight:normal;">43186</div><div class="t" style="left:454.50px;top:837.98px;font-size:9.0px;color:#333;font-weight:normal;">6074EK31</div><div class="t" style="left:314.80px;width:600px;text-align:right;top:837.81px;font-size:9.2px;color:#333;font-weight:normal;">236883037</div><div class="t" style="left:935.50px;top:837.81px;font-size:9.2px;color:#333;font-weight:normal;">130498</div><div class="t" style="left:735.80px;width:600px;text-align:right;top:837.81px;font-size:9.2px;color:#333;font-weight:normal;">2,32</div><div class="t" style="left:1356.50px;top:837.81px;font-size:9.2px;color:#333;font-weight:normal;">21.08.2023</div><div class="t" style="left:-166.20px;width:600px;text-align:right;top:864.61px;font-size:9.2px;color:#333;font-weight:normal;">43186</div><div class="t" style="left:454.50px;top:864.78px;font-size:9.0px;color:#333;font-weight:normal;">6074EK31</div><div class="t" style="left:314.80px;width:600px;text-align:right;top:864.61px;font-size:9.2px;color:#333;font-weight:normal;">236883037</div><div class="t" style="left:935.50px;top:864.61px;font-size:9.2px;color:#333;font-weight:normal;">130498</div><div class="t" style="left:735.80px;width:600px;text-align:right;top:864.61px;font-size:9.2px;color:#333;font-weight:normal;">13,04</div><div class="t" style="left:1356.50px;top:864.61px;font-size:9.2px;color:#333;font-weight:normal;">22.08.2023</div><div class="t" style="left:-166.20px;width:600px;text-align:right;top:891.01px;font-size:9.2px;color:#333;font-weight:normal;">121378101</div><div class="t" style="left:454.50px;top:891.18px;font-size:9.0px;color:#333;font-weight:normal;">1989EУ31</div><div class="t" style="left:314.80px;width:600px;text-align:right;top:891.01px;font-size:9.2px;color:#333;font-weight:normal;">257340031</div><div class="t" style="left:935.50px;top:891.01px;font-size:9.2px;color:#333;font-weight:normal;">88452</div><div class="t" style="left:735.80px;width:600px;text-align:right;top:891.01px;font-size:9.2px;color:#333;font-weight:normal;">148,93</div><div class="t" style="left:1356.50px;top:891.01px;font-size:9.2px;color:#333;font-weight:normal;">23.08.2023</div><div class="t" style="left:-166.20px;width:600px;text-align:right;top:917.61px;font-size:9.2px;color:#333;font-weight:normal;">43186</div><div class="t" style="left:454.50px;top:917.78px;font-size:9.0px;color:#333;font-weight:normal;">6074EK31</div><div class="t" style="left:314.80px;width:600px;text-align:right;top:917.61px;font-size:9.2px;color:#333;font-weight:normal;">236883037</div><div class="t" style="left:935.50px;top:917.61px;font-size:9.2px;color:#333;font-weight:normal;">130498</div><div class="t" style="left:735.80px;width:600px;text-align:right;top:917.61px;font-size:9.2px;color:#333;font-weight:normal;">90,35</div><div class="t" style="left:1356.50px;top:917.61px;font-size:9.2px;color:#333;font-weight:normal;">23.08.2023</div><div class="t" style="left:-166.20px;width:600px;text-align:right;top:944.01px;font-size:9.2px;color:#333;font-weight:normal;">121378101</div><div class="t" style="left:454.50px;top:944.18px;font-size:9.0px;color:#333;font-weight:normal;">1989EУ31</div><div class="t" style="left:314.80px;width:600px;text-align:right;top:944.01px;font-size:9.2px;color:#333;font-weight:normal;">257340031</div><div class="t" style="left:935.50px;top:944.01px;font-size:9.2px;color:#333;font-weight:normal;">88452</div><div class="t" style="left:735.80px;width:600px;text-align:right;top:944.01px;font-size:9.2px;color:#333;font-weight:normal;">,7</div><div class="t" style="left:1356.50px;top:944.01px;font-size:9.2px;color:#333;font-weight:normal;">24.08.2023</div>
</body></html>
